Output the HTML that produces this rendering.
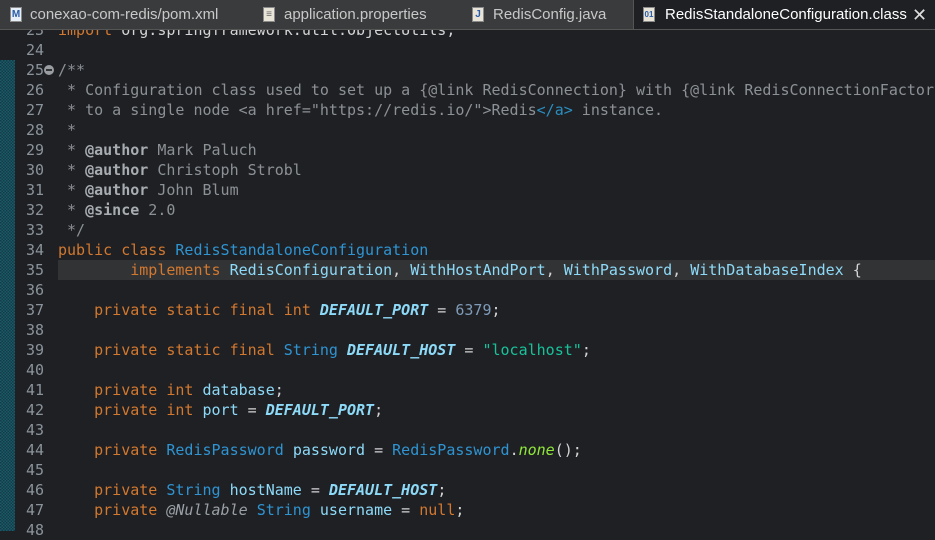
<!DOCTYPE html><html><head><style>
body{margin:0;width:935px;height:530px;overflow:hidden;background:#1f2024;font-family:"DejaVu Sans Mono",monospace;}
.tabs{position:absolute;left:0;top:0;width:935px;height:29px;background:#3a3b3d;border-bottom:1px solid #555;font-family:"Liberation Sans",sans-serif;font-size:15px;color:#c8c8c8;z-index:5}
.tab{position:absolute;top:0;height:29px;line-height:30px;white-space:nowrap}
.act{background:#1f2024;color:#fff;border-left:1px solid #555;height:29px}
.ic{position:absolute;top:7px;width:12px;height:15px;background:#e8e4d8;border:1px solid #8a8a8a;box-sizing:border-box;font:bold 10px "Liberation Sans";color:#2a5ca8;text-align:center;line-height:14px}
.strip{position:absolute;left:0;top:60px;width:15px;height:471px;background:repeating-conic-gradient(#1d5a68 0 25%,#133c48 0 50%) 0 0/3px 3px}
.ln{position:absolute;left:0;width:44px;text-align:right;color:#8a939b;font-size:15px;line-height:20px}
.cd{position:absolute;left:58px;font-size:15px;line-height:20px;white-space:pre;color:#d4d4d4}
.k{color:#d2782f}.t{color:#2e94d2}.f{color:#8ddaf8}.c{color:#8c9196}.j{color:#a8adb2;font-weight:bold}
.cs{color:#8ddaf8;font-weight:bold;font-style:italic}.s{color:#17c29a}.n{color:#7f9bb8}.m{color:#8fe83a;font-style:italic}
.a{color:#9aa0a6;font-style:italic}.h{color:#2a8ec0}
.hl{position:absolute;left:58px;top:260px;width:877px;height:20px;background:#323335}
</style></head><body>
<div class="tabs">
<div class="tab" style="left:10px"><span class="ic" style="left:0;background:#e6eef8">M</span><span style="margin-left:20px">conexao-com-redis/pom.xml</span></div>
<div class="tab" style="left:263px"><span class="ic" style="left:0;color:#666">≡</span><span style="margin-left:21px">application.properties</span></div>
<div class="tab" style="left:472px"><span class="ic" style="left:0">J</span><span style="margin-left:21px">RedisConfig.java</span></div>
<div class="tab act" style="left:633px;width:302px"><span class="ic" style="left:9px;font-size:8px">01</span><span style="margin-left:31px">RedisStandaloneConfiguration.class</span><span style="position:absolute;left:278px;top:0;font-size:18px;color:#ddd">✕</span></div>
</div>
<div class="strip"></div>
<div class="hl"></div>
<div id="c"></div>
<script>
var L=[
[23,'<span class="k">import</span> org.springframework.util.ObjectUtils;'],
[24,''],
[25,'<span class="c">/**</span>'],
[26,'<span class="c"> * Configuration class used to set up a {@link RedisConnection} with {@link RedisConnectionFactory}</span>'],
[27,'<span class="c"> * to a single node &lt;a href="https://redis.io/"&gt;Redis<span class="h">&lt;/a&gt;</span> instance.</span>'],
[28,'<span class="c"> *</span>'],
[29,'<span class="c"> * </span><span class="j">@author</span><span class="c"> Mark Paluch</span>'],
[30,'<span class="c"> * </span><span class="j">@author</span><span class="c"> Christoph Strobl</span>'],
[31,'<span class="c"> * </span><span class="j">@author</span><span class="c"> John Blum</span>'],
[32,'<span class="c"> * </span><span class="j">@since</span><span class="c"> 2.0</span>'],
[33,'<span class="c"> */</span>'],
[34,'<span class="k">public class</span> <span class="t">RedisStandaloneConfiguration</span>'],
[35,'        <span class="k">implements</span> <span class="f">RedisConfiguration</span>, <span class="f">WithHostAndPort</span>, <span class="f">WithPassword</span>, <span class="f">WithDatabaseIndex</span> {'],
[36,''],
[37,'    <span class="k">private static final int</span> <span class="cs">DEFAULT_PORT</span> = <span class="n">6379</span>;'],
[38,''],
[39,'    <span class="k">private static final</span> <span class="t">String</span> <span class="cs">DEFAULT_HOST</span> = <span class="s">"localhost"</span>;'],
[40,''],
[41,'    <span class="k">private int</span> <span class="f">database</span>;'],
[42,'    <span class="k">private int</span> <span class="f">port</span> = <span class="cs">DEFAULT_PORT</span>;'],
[43,''],
[44,'    <span class="k">private</span> <span class="t">RedisPassword</span> <span class="f">password</span> = <span class="t">RedisPassword</span>.<span class="m">none</span>();'],
[45,''],
[46,'    <span class="k">private</span> <span class="t">String</span> <span class="f">hostName</span> = <span class="cs">DEFAULT_HOST</span>;'],
[47,'    <span class="k">private</span> <span class="a">@Nullable</span> <span class="t">String</span> <span class="f">username</span> = <span class="k">null</span>;'],
[48,'']];
var h='';L.forEach(function(l){var y=260+(l[0]-35)*20;
h+='<div class="ln" style="top:'+y+'px">'+l[0]+'</div><div class="cd" style="top:'+y+'px">'+l[1]+'</div>';});
h+='<div style="position:absolute;left:44px;top:65px;width:10px;height:10px;border-radius:50%;background:#9a9ea3"><div style="margin:4px 2px;height:2px;background:#333"></div></div>';
document.getElementById('c').innerHTML=h;
</script>
</body></html>
